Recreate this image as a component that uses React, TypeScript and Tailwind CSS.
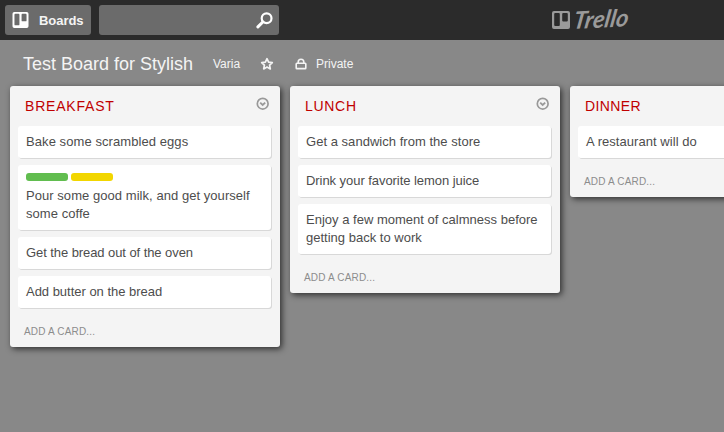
import React from "react";

type Card = { text: string; tracking: string; labels?: string[] };
type List = { title: string; tracking: string; cards: Card[] };

const lists: List[] = [
  {
    title: "BREAKFAST",
    tracking: "tracking-[0.8px]",
    cards: [
      { text: "Bake some scrambled eggs", tracking: "tracking-[0.075px]" },
      {
        text: "Pour some good milk, and get yourself some coffe",
        tracking: "tracking-[0.05px]",
        labels: ["bg-[#61bd4f]", "bg-[#f2d600]"],
      },
      { text: "Get the bread out of the oven", tracking: "tracking-[-0.075px]" },
      { text: "Add butter on the bread", tracking: "tracking-[-0.02px]" },
    ],
  },
  {
    title: "LUNCH",
    tracking: "tracking-[0.7px]",
    cards: [
      { text: "Get a sandwich from the store", tracking: "tracking-[0.03px]" },
      { text: "Drink your favorite lemon juice", tracking: "tracking-[-0.055px]" },
      { text: "Enjoy a few moment of calmness before getting back to work", tracking: "tracking-[0.01px]" },
    ],
  },
  {
    title: "DINNER",
    tracking: "tracking-[0.4px]",
    cards: [{ text: "A restaurant will do", tracking: "tracking-[0.05px]" }],
  },
];

function BoardMark({ className }: { className: string }) {
  return (
    <svg viewBox="0 0 18 18" className={className} fill="currentColor">
      <path
        fillRule="evenodd"
        d="M2 0h14a2 2 0 0 1 2 2v14a2 2 0 0 1-2 2H2a2 2 0 0 1-2-2V2a2 2 0 0 1 2-2ZM3.2 2a1 1 0 0 0-1 1v11a1 1 0 0 0 1 1h3.6a1 1 0 0 0 1-1V3a1 1 0 0 0-1-1ZM11.2 2a1 1 0 0 0-1 1v6.5a1 1 0 0 0 1 1h3.6a1 1 0 0 0 1-1V3a1 1 0 0 0-1-1Z"
      />
    </svg>
  );
}

function TopBar() {
  return (
    <header className="flex h-10 items-center bg-[#2b2b2b] pl-[5px]">
      <button className="flex h-[30px] w-[86px] items-center rounded-[3px] bg-[#6b6b6b] pl-[7px] text-[13px] font-bold text-[#f4f4f4]">
        <BoardMark className="h-4 w-[17px] text-white" />
        <span className="ml-[10px] pt-px tracking-[-0.05px]">Boards</span>
      </button>
      <div className="ml-2 flex h-[30px] w-[180px] items-center justify-end rounded-[3px] bg-[#6b6b6b] pr-[6px]">
        <svg viewBox="0 0 17 17" className="h-[17px] w-[17px] text-white" fill="none" stroke="currentColor">
          <circle cx="10.6" cy="6.2" r="4.9" strokeWidth="2.2" />
          <path d="M6.8 10 1.9 14.9" strokeWidth="3" strokeLinecap="round" />
        </svg>
      </div>
      <div className="ml-[273px] flex items-center text-[#9a9a9a]">
        <BoardMark className="h-[18px] w-[18px]" />
        <svg viewBox="0 0 72 34" className="h-[34px] w-[72px]">
          <text
            x="8"
            y="26"
            transform="rotate(-3 4 26) skewX(-12)"
            textLength="55"
            lengthAdjust="spacingAndGlyphs"
            fill="currentColor"
            className="font-['Lato',sans-serif] text-[24px] font-bold italic"
          >
            Trello
          </text>
        </svg>
      </div>
    </header>
  );
}

function BoardHeader() {
  return (
    <div className="flex h-[46px] items-center pt-px pl-[23px] text-[12px] text-[#f4f4f4]">
      <h1 className="w-[190px] text-[18px] leading-6 whitespace-nowrap">Test Board for Stylish</h1>
      <span className="w-[47px] pt-px">Varia</span>
      <svg viewBox="0 0 14 14" className="h-[14px] w-[14px]" fill="none" stroke="currentColor" strokeWidth="1.7" strokeLinejoin="round">
        <path d="m7 1.7 1.6 3.4 3.7.5-2.7 2.6.7 3.7L7 10.1l-3.3 1.8.7-3.7-2.7-2.6 3.7-.5Z" />
      </svg>
      <svg viewBox="0 0 12 12" className="ml-[21px] h-3 w-3" fill="none" stroke="currentColor" strokeWidth="1.6">
        <rect x="1.2" y="5.2" width="9.6" height="5.4" rx="0.7" />
        <path d="M3.2 5V4a2.8 2.8 0 0 1 5.6 0v1" />
      </svg>
      <span className="ml-[9px] pt-px">Private</span>
    </div>
  );
}

function CardView({ card }: { card: Card }) {
  return (
    <div className="w-[253px] rounded-[3px] bg-white px-2 py-[7px] text-[13px] leading-[18px] text-[#4d4d4d] shadow-[1px_1px_0_#d8d8d8]">
      {card.labels && (
        <div className="mt-px mb-[6px] flex gap-[3px]">
          {card.labels.map((color) => (
            <span key={color} className={`h-2 w-[42px] rounded-[3px] ${color}`} />
          ))}
        </div>
      )}
      <p className={card.tracking}>{card.text}</p>
    </div>
  );
}

function ListView({ list }: { list: List }) {
  return (
    <section className="w-[270px] shrink-0 rounded-[3px] bg-[#f4f4f4] px-2 shadow-[2px_2px_6px_rgba(0,0,0,0.65)]">
      <div className="flex h-10 items-start justify-between pr-[3px] pl-[7px]">
        <h2 className={`pt-[10px] text-[14px] leading-5 text-[#c00000] ${list.tracking}`}>{list.title}</h2>
        <svg viewBox="0 0 13 13" className="mt-[11px] h-[13px] w-[13px] text-[#999]" fill="none" stroke="currentColor">
          <circle cx="6.7" cy="6.7" r="5.4" strokeWidth="1.7" />
          <path d="M4.2 5.6 6.7 8l2.5-2.4" strokeWidth="1.8" />
        </svg>
      </div>
      <div className="flex flex-col gap-[7px]">
        {list.cards.map((card) => (
          <CardView key={card.text} card={card} />
        ))}
      </div>
      <div className="flex h-[39px] items-center pt-[7px] pl-[6px] text-[10px] tracking-[0.17px] text-[#8c8c8c]">
        ADD A CARD...
      </div>
    </section>
  );
}

export default function App() {
  return (
    <div className="h-[432px] w-[724px] overflow-hidden bg-[#888] font-['Liberation_Sans',Arial,sans-serif]">
      <TopBar />
      <BoardHeader />
      <main className="flex items-start gap-[10px] pl-[10px]">
        {lists.map((list) => (
          <ListView key={list.title} list={list} />
        ))}
      </main>
    </div>
  );
}
